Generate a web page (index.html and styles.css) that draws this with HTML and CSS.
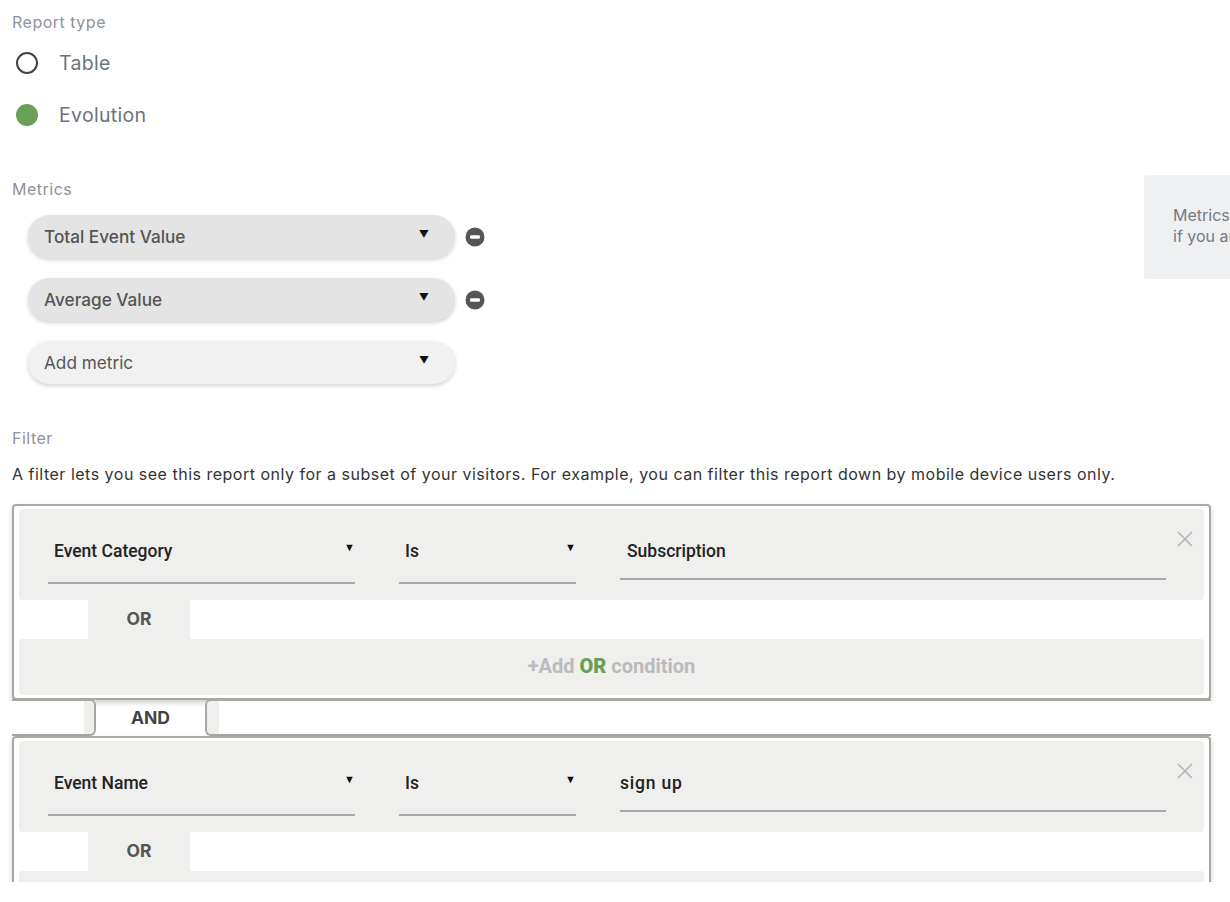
FILE: index.html
```html
<!DOCTYPE html>
<html>
<head>
<meta charset="utf-8">
<link rel="stylesheet" href="styles.css">
</head>
<body>
<div class="page">
  <div class="section report-type">
    <div class="label">Report type</div>
    <div class="radio-row"><span class="radio"></span><span class="radio-text">Table</span></div>
    <div class="radio-row"><span class="radio checked"></span><span class="radio-text">Evolution</span></div>
  </div>

  <div class="metrics-wrap">
    <div class="section metrics">
      <div class="label">Metrics</div>
      <div class="metric-list">
        <div class="metric-row">
          <div class="pill"><span>Total Event Value</span><span class="caret">&#9660;</span></div>
          <svg class="remove" width="20" height="20" viewBox="0 0 20 20"><circle cx="10" cy="10" r="9.5" fill="#555"/><rect x="5" y="8.2" width="10" height="3.6" rx="1.4" fill="#fff"/></svg>
        </div>
        <div class="metric-row">
          <div class="pill"><span>Average Value</span><span class="caret">&#9660;</span></div>
          <svg class="remove" width="20" height="20" viewBox="0 0 20 20"><circle cx="10" cy="10" r="9.5" fill="#555"/><rect x="5" y="8.2" width="10" height="3.6" rx="1.4" fill="#fff"/></svg>
        </div>
        <div class="metric-row">
          <div class="pill add"><span>Add metric</span><span class="caret">&#9660;</span></div>
        </div>
      </div>
    </div>
    <div class="help-box">Metrics are the quantitative measurements<br>if you are analyzing</div>
  </div>

  <div class="section filter">
    <div class="label">Filter</div>
    <p class="desc">A filter lets you see this report only for a subset of your visitors. For example, you can filter this report down by mobile device users only.</p>

    <div class="group">
      <div class="cond">
        <div class="field f1"><span>Event Category</span><span class="caret">&#9660;</span></div>
        <div class="field f2"><span>Is</span><span class="caret">&#9660;</span></div>
        <div class="field f3"><span>Subscription</span></div>
        <svg class="close" width="18" height="18" viewBox="0 0 18 18"><path d="M2 2 L16 16 M16 2 L2 16" stroke="#b5b5b5" stroke-width="1.6"/></svg>
      </div>
      <div class="or-row"><span class="or-tab">OR</span></div>
      <div class="add-or">+Add <b>OR</b> condition</div>
    </div>

    <div class="and-row">
      <span class="and-left"></span>
      <span class="and-label">AND</span>
      <span class="and-right"></span>
    </div>

    <div class="group">
      <div class="cond">
        <div class="field f1"><span>Event Name</span><span class="caret">&#9660;</span></div>
        <div class="field f2"><span>Is</span><span class="caret">&#9660;</span></div>
        <div class="field f3 f3b"><span>sign up</span></div>
        <svg class="close" width="18" height="18" viewBox="0 0 18 18"><path d="M2 2 L16 16 M16 2 L2 16" stroke="#b5b5b5" stroke-width="1.6"/></svg>
      </div>
      <div class="or-row"><span class="or-tab">OR</span></div>
      <div class="add-or">+Add <b>OR</b> condition</div>
    </div>
  </div>
</div>
</body>
</html>
```

FILE: styles.css
```css
html, body {
  margin: 0;
  padding: 0;
  background: #fff;
}
body {
  font-family: Inter, "Liberation Sans", Arial, sans-serif;
}
.page {
  height: 882px;
  overflow: hidden;
  padding: 0 0 0 12px;
  box-sizing: border-box;
}
.label {
  font-size: 16px;
  letter-spacing: 0.5px;
  color: #8e939a;
  line-height: 18px;
}
.report-type {
  padding-top: 13px;
}
.radio-row {
  display: flex;
  align-items: center;
  height: 52px;
  margin-left: 4px;
}
.report-type .label + .radio-row {
  margin-top: 6px;
}
.radio {
  width: 18px;
  height: 18px;
  border: 2px solid #444;
  border-radius: 50%;
  box-sizing: content-box;
}
.radio.checked {
  border-color: #6a9f58;
  background: #6a9f58;
}
.radio-text {
  margin-left: 21px;
  font-size: 19.5px;
  letter-spacing: 0.3px;
  color: #6b7380;
}

.metrics-wrap {
  display: flex;
  justify-content: space-between;
  margin-top: 35px;
}
.metrics .label {
  margin-top: 4px;
}
.metric-list {
  margin-top: 17px;
  margin-left: 16px;
  display: flex;
  flex-direction: column;
  gap: 20px;
}
.metric-row {
  display: flex;
  align-items: center;
}
.pill {
  width: 427px;
  height: 43px;
  box-sizing: border-box;
  border-radius: 22px;
  background: #e4e4e4;
  box-shadow: 0 2px 4px rgba(0,0,0,0.18);
  display: flex;
  align-items: center;
  justify-content: space-between;
  padding: 0 26px 0 16px;
  font-weight: 500;
  font-size: 17.2px;
  color: #555;
}
.pill.add {
  background: #f1f1f1;
  font-weight: 400;
  color: #555;
}
.caret {
  font-size: 10px;
  color: #111;
  position: relative;
  top: -3px;
}
.remove {
  margin-left: 10px;
  position: relative;
  top: 0px;
}
.help-box {
  width: 86px;
  height: 104px;
  margin-top: -1px;
  background: #eef0f2;
  border-radius: 3px 0 0 3px;
  box-sizing: border-box;
  padding: 30px 0 0 29px;
  font-size: 16px;
  line-height: 21px;
  color: #737a85;
  white-space: nowrap;
  overflow: hidden;
}

.filter {
  margin-top: 45px;
  padding-right: 19px;
}
.desc {
  margin: 17px 0 0 0;
  font-size: 16px;
  letter-spacing: 0.5px;
  color: #333;
  line-height: 20px;
}
.group {
  border: 2px solid #aba69f;
  border-radius: 4px;
  padding: 3px 5px 3px 5px;
  box-shadow: 0 3px 5px rgba(0,0,0,0.18);
  background: #fff;
  position: relative;
}
.filter .desc + .group {
  margin-top: 20px;
}
.cond {
  background: #efefee;
  border-radius: 4px;
  height: 91px;
  display: flex;
  align-items: flex-start;
  padding: 0 0 0 29px;
  position: relative;
}
.field {
  margin-top: 27px;
  height: 48px;
  box-sizing: border-box;
  border-bottom: 2px solid #a8a8a8;
  display: flex;
  justify-content: space-between;
  align-items: flex-start;
  padding: 5px 0 0 6px;
  font-family: Roboto, "Liberation Sans", sans-serif;
  font-weight: 500;
  font-size: 17.5px;
  line-height: 20px;
  color: #222;
}
.field .caret {
  top: -3px;
  font-size: 11px;
  line-height: 20px;
}
.f1 { width: 307px; }
.f2 { width: 177px; margin-left: 44px; }
.f3 { width: 546px; margin-left: 44px; padding-left: 7px; height: 44px; }
.f3b { padding-left: 0; letter-spacing: 0.8px; }
.close {
  position: absolute;
  right: 10px;
  top: 21px;
}
.or-row {
  height: 39px;
  display: flex;
}
.or-tab {
  margin-left: 69px;
  width: 102px;
  background: #efefee;
  display: flex;
  align-items: center;
  justify-content: center;
  padding-bottom: 2px;
  box-sizing: border-box;
  font-weight: 700;
  font-size: 17.5px;
  color: #555;
}
.add-or {
  background: #efefee;
  border-radius: 4px;
  height: 56px;
  display: flex;
  align-items: center;
  justify-content: center;
  padding-bottom: 2px;
  box-sizing: border-box;
  font-family: Roboto, "Liberation Sans", sans-serif;
  font-weight: 700;
  font-size: 20px;
  color: #bbb;
  white-space: pre;
}
.add-or b {
  color: #6a9f58;
}
.and-row {
  display: flex;
  height: 37px;
  align-items: stretch;
  margin-top: -1px;
  position: relative;
}
.and-left {
  width: 84px;
  border: 2px solid #aba69f;
  border-left: 0;
  border-radius: 0 6px 6px 0;
  box-sizing: border-box;
  background: linear-gradient(to right, #fff 88%, #efefee 88%);
}
.and-label {
  width: 109px;
  display: flex;
  align-items: center;
  justify-content: center;
  font-weight: 700;
  font-size: 17.5px;
  color: #444;
}
.and-right {
  flex: 1;
  border: 2px solid #aba69f;
  border-right: 0;
  border-radius: 6px 0 0 6px;
  box-sizing: border-box;
  background: linear-gradient(to right, #efefee 12px, #fff 12px);
}
```
